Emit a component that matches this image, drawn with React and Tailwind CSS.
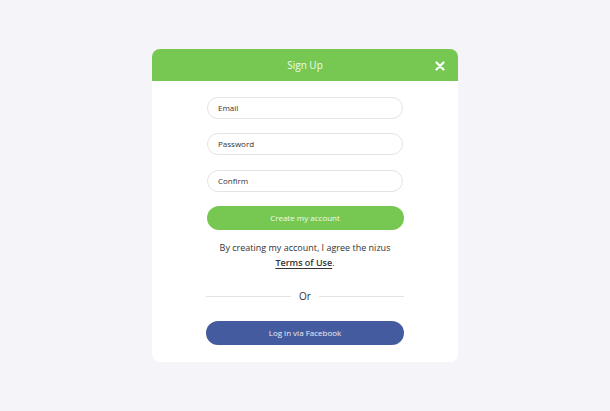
export default function App() {
  return (
    <div
      className="min-h-screen w-full bg-[#f4f4f9] flex items-start justify-center pt-[49px]"
      style={{ fontFamily: '"Open Sans", sans-serif' }}
    >
      <div className="w-[306px] h-[313px] bg-white rounded-[8px] overflow-hidden flex flex-col">
        {/* header */}
        <div className="h-[32px] bg-[#76c853] relative flex items-center justify-center">
          <span className="text-[10px] text-white/90">Sign Up</span>
          <button className="absolute right-[13px] top-[12px] w-[10px] h-[10px] flex items-center justify-center">
            <svg viewBox="0 0 10 10" className="w-[10px] h-[10px]">
              <path d="M1.5 1.5 L8.5 8.5 M8.5 1.5 L1.5 8.5" stroke="white" strokeWidth="2.2" strokeLinecap="round" />
            </svg>
          </button>
        </div>

        {/* body */}
        <div className="flex flex-col items-center pt-[16px]">
          <div className="w-[196px] h-[22px] rounded-full border border-[#e3e3e3] flex items-center pl-[10px] text-[8px] text-[#333]">
            Email
          </div>
          <div className="w-[196px] h-[22px] mt-[14px] rounded-full border border-[#e3e3e3] flex items-center pl-[10px] text-[8px] text-[#333]">
            Password
          </div>
          <div className="w-[196px] h-[22px] mt-[15px] rounded-full border border-[#e3e3e3] flex items-center pl-[10px] text-[8px] text-[#333]">
            Confirm
          </div>
          <button className="w-[197px] h-[24px] mt-[14px] rounded-full bg-[#76c853] text-white/90 text-[8px]">
            Create my account
          </button>
          <p className="mt-[10px] text-center text-[9px] leading-[15px] text-[#333]">
            By creating my account, I agree the nizus
            <br />
            <span className="font-semibold underline underline-offset-2">Terms of Use</span>.
          </p>
          <div className="w-[198px] mt-[19px] flex items-center gap-[8px]">
            <div className="flex-1 h-px bg-[#e3e3e3]"></div>
            <span className="text-[10px] text-[#333]">Or</span>
            <div className="flex-1 h-px bg-[#e3e3e3]"></div>
          </div>
          <button className="w-[198px] h-[24px] mt-[17px] rounded-full bg-[#455b9f] text-white/90 text-[8px]">
            Log in via Facebook
          </button>
        </div>
      </div>
    </div>
  );
}
